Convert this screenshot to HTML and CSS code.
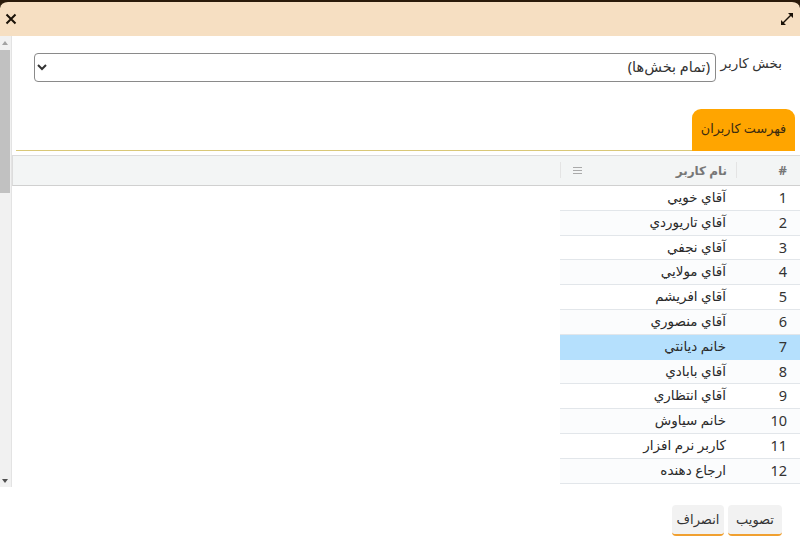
FILE: index.html
```html
<!DOCTYPE html>
<html lang="fa">
<head>
<meta charset="utf-8">
<title>فهرست کاربران</title>
<link rel="stylesheet" href="styles.css">
</head>
<body>
<div class="window">
  <header class="titlebar">
    <svg class="icon" width="16" height="16" viewBox="0 0 16 16"><path d="M3.5 3.5l9 9M12.5 3.5l-9 9" stroke="#1a1208" stroke-width="2" fill="none"/></svg>
    <svg class="icon" width="16" height="16" viewBox="0 0 16 16"><path d="M3.5 12.5l9-9" stroke="#1a1208" stroke-width="1.4" fill="none"/><path d="M9 2h5v5zM2 9v5h5z" fill="#1a1208"/></svg>
  </header>
  <div class="body">
    <div class="scrollbar">
      <span class="arrow-up"></span>
      <span class="thumb"></span>
      <span class="arrow-down"></span>
    </div>
    <main class="main">
      <div class="filter">
        <label class="filter-label">بخش كاربر</label>
        <select class="filter-select"><option>(تمام بخش‌ها)</option></select>
      </div>
      <div class="tabs"><div class="tab">فهرست کاربران</div></div>
      <div class="grid">
        <div class="grid-head">
          <div class="cell-num head-num">#</div>
          <div class="cell-name head-name"><span>نام کاربر</span><span class="menu"></span></div>
        </div>
        <div class="row"><div class="cell-num">1</div><div class="cell-name">آقاي خويي</div></div>
        <div class="row alt"><div class="cell-num">2</div><div class="cell-name">آقاي تاريوردي</div></div>
        <div class="row"><div class="cell-num">3</div><div class="cell-name">آقاي نجفي</div></div>
        <div class="row alt"><div class="cell-num">4</div><div class="cell-name">آقاي مولايي</div></div>
        <div class="row"><div class="cell-num">5</div><div class="cell-name">آقاي افريشم</div></div>
        <div class="row alt"><div class="cell-num">6</div><div class="cell-name">آقاي منصوري</div></div>
        <div class="row selected"><div class="cell-num">7</div><div class="cell-name">خانم دیانتي</div></div>
        <div class="row alt"><div class="cell-num">8</div><div class="cell-name">آقاي بابادي</div></div>
        <div class="row"><div class="cell-num">9</div><div class="cell-name">آقاي انتظاري</div></div>
        <div class="row alt"><div class="cell-num">10</div><div class="cell-name">خانم سياوش</div></div>
        <div class="row"><div class="cell-num">11</div><div class="cell-name">کاربر نرم افزار</div></div>
        <div class="row alt"><div class="cell-num">12</div><div class="cell-name">ارجاع دهنده</div></div>
      </div>
    </main>
  </div>
  <footer class="footer">
    <button class="btn">تصويب</button>
    <button class="btn btn-cancel">انصراف</button>
  </footer>
</div>
</body>
</html>
```
FILE: styles.css
```css
* { box-sizing: border-box; }
html, body { margin: 0; height: 100%; background: #fff; overflow: hidden; }
body { font-family: "Noto Sans", "DejaVu Sans", sans-serif; font-size: 14px; color: #333; }
.window { width: 800px; height: 549px; display: flex; flex-direction: column; background: #2a1a0a; }
.titlebar {
  height: 36px; border-top: 2px solid #2a1a0a; background: #f6dfc2; border-radius: 8px 8px 0 0;
  display: flex; justify-content: space-between; align-items: center; padding: 0 5px 0 3px; flex: none;
}
.icon { display: block; }
.body { flex: none; height: 451px; display: flex; background: #fff; }
.scrollbar { width: 12px; flex: none; background: #f1f1f1; border-right: 1px solid #e3e3e3; display: flex; flex-direction: column; align-items: center; padding-right: 2px; }
.thumb { width: 10px; height: 143px; background: #c1c1c1; margin-top: 5px; }
.arrow-up, .arrow-down { width: 0; height: 0; border-left: 3px solid transparent; border-right: 3px solid transparent; }
.arrow-up { border-bottom: 4px solid #a3a3a3; margin-top: 5px; }
.arrow-down { border-top: 4px solid #505050; margin-top: auto; margin-bottom: 4px; }
.main { flex: 1; min-width: 0; direction: rtl; display: flex; flex-direction: column; }
.filter { display: flex; align-items: flex-start; padding: 17px 18px 0 22px; gap: 6px; height: 73px; flex: none; }
.filter-label { width: 60px; flex: none; line-height: 20px; color: #333; font-size: 13.5px; white-space: nowrap; }
.filter-select { flex: 1; min-width: 0; height: 29px; border: 1px solid #8a8a8a; border-radius: 4px; background: #fff; padding: 0 1px 4px 4px; font: inherit; font-size: 14.5px; color: #333; direction: rtl; }
.tabs { height: 42px; flex: none; display: flex; margin: 0 5px 0 4px; border-bottom: 1px solid #d9c878; }
.tab { width: 103px; height: 42px; background: #ffa500; border-radius: 9px 9px 0 0; display: flex; align-items: center; justify-content: center; font-size: 12.8px; color: #3a2a10; padding-bottom: 5px; }
.grid { margin-top: 4px; border-top: 1px solid #dcdcdc; flex: 1; min-height: 0; }
.grid-head { height: 30px; display: flex; background: #f3f5f5; border-bottom: 1px solid #d0d0d0; border-left: 1px solid #dcdcdc; color: #777; font-weight: 700; font-size: 13px; }
.cell-num { width: 63px; flex: none; padding-right: 13px; text-align: right; font-size: 14.5px; }
.cell-name { width: 177px; flex: none; padding-right: 11px; text-align: right; font-size: 13.5px; color: #2a2a2a; }
.head-num { line-height: 28px; font-size: 13px; }
.head-name { display: flex; justify-content: space-between; align-items: center; border-right: 1px solid #e4e4e4; border-left: 1px solid #e4e4e4; height: 16px; margin-top: 6px; padding-left: 12px; padding-right: 9px; font-weight: 700; font-size: 12px; color: #777; }
.menu { width: 9px; height: 7px; border-top: 1px solid #aaa; border-bottom: 1px solid #aaa; position: relative; }
.menu::after { content: ""; position: absolute; left: 0; right: 0; top: 2px; border-top: 1px solid #aaa; }
.row { display: flex; width: 240px; height: 24.8px; line-height: 22px; border-bottom: 1px solid #e2e6ea; background: #fff; color: #333; }
.row.alt { background: #fbfcfd; }
.row.selected { background: #b5e0fd; border-bottom-color: #b5e0fd; }
.footer { flex: 1; background: #fff; direction: rtl; display: flex; gap: 4px; padding: 18px 18px 0 0; align-items: flex-start; }
.btn { width: 54px; height: 31px; border: 0; border-bottom: 2px solid #f0a030; border-radius: 4px; background: #f2f2f2; font: inherit; font-size: 13px; color: #333; padding: 0 0 2px; }
.btn-cancel { width: 52px; }
```
